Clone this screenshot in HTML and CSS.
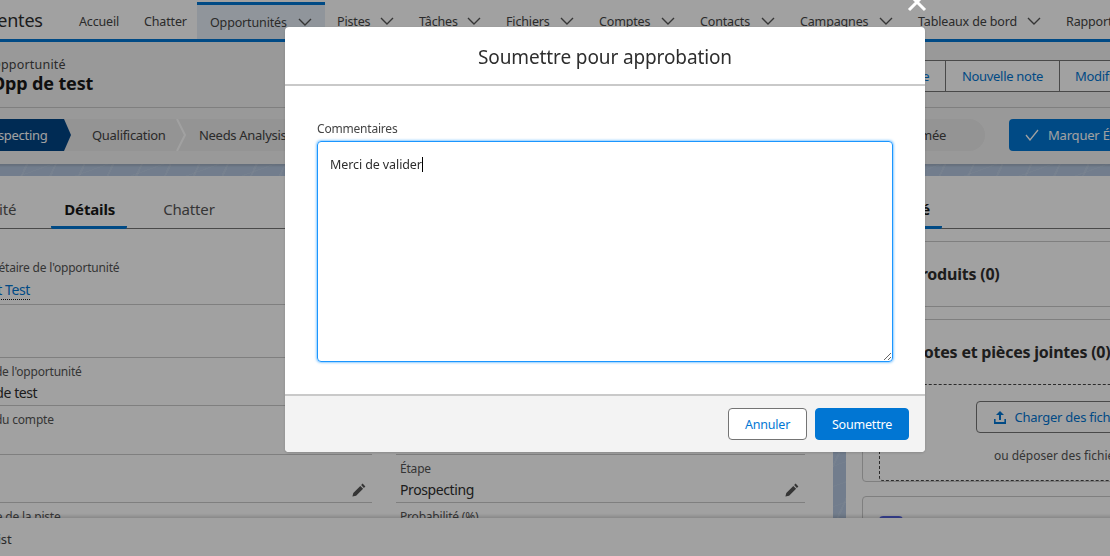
FILE: index.html
```html
<!DOCTYPE html>
<html lang="fr">
<head>
<meta charset="utf-8">
<title>Soumettre pour approbation</title>
<link rel="stylesheet" href="styles.css">
</head>
<body>
<div class="app">
  <nav class="nav">
    <div class="brand">Ventes</div>
    <div class="tabs">
      <a class="tab">Accueil</a>
      <a class="tab">Chatter</a>
      <a class="tab active">Opportunités<svg class="chev" viewBox="0 0 14 8"><path d="M1 1l6 6 6-6"/></svg></a>
      <a class="tab">Pistes<svg class="chev" viewBox="0 0 14 8"><path d="M1 1l6 6 6-6"/></svg></a>
      <a class="tab">Tâches<svg class="chev" viewBox="0 0 14 8"><path d="M1 1l6 6 6-6"/></svg></a>
      <a class="tab">Fichiers<svg class="chev" viewBox="0 0 14 8"><path d="M1 1l6 6 6-6"/></svg></a>
      <a class="tab">Comptes<svg class="chev" viewBox="0 0 14 8"><path d="M1 1l6 6 6-6"/></svg></a>
      <a class="tab">Contacts<svg class="chev" viewBox="0 0 14 8"><path d="M1 1l6 6 6-6"/></svg></a>
      <a class="tab">Campagnes<svg class="chev" viewBox="0 0 14 8"><path d="M1 1l6 6 6-6"/></svg></a>
      <a class="tab">Tableaux de bord<svg class="chev" viewBox="0 0 14 8"><path d="M1 1l6 6 6-6"/></svg></a>
      <a class="tab">Rapports</a>
    </div>
  </nav>

  <header class="head">
    <div class="head-title">
      <div class="kind">Opportunité</div>
      <div class="name">Opp de test</div>
    </div>
    <div class="actions">
      <a class="action first">Nouvelle tâche</a>
      <a class="action">Nouvelle note</a>
      <a class="action">Modifier</a>
    </div>
  </header>

  <section class="path-row">
    <div class="path">
      <div class="stage current">Prospecting</div>
      <div class="stage second">Qualification<svg class="sep" viewBox="0 0 10 32"><path d="M1 0l8 16-8 16"/></svg></div>
      <div class="stage third">Needs Analysis</div>
      <div class="stage last">Fermée</div>
    </div>
    <button class="mark"><svg class="check" viewBox="0 0 14 12"><path d="M1 6l4 5 8-10"/></svg>Marquer Étape</button>
  </section>

  <main class="content">
    <section class="card-main">
      <div class="detail-tabs">
        <a class="dtab">Activité</a>
        <a class="dtab on">Détails</a>
        <a class="dtab">Chatter</a>
      </div>
      <div class="fields">
        <div class="col col-left">
          <div class="field owner"><div class="lab">Propriétaire de l'opportunité</div><div class="val owner-val"><a class="link">Test Test</a></div></div>
          <div class="field blank"></div>
          <div class="field"><div class="lab">Nom de l'opportunité</div><div class="val">Opp de test</div></div>
          <div class="field tall"><div class="lab">Nom du compte</div><div class="val"></div></div>
          <div class="field"><div class="lab">&nbsp;</div><div class="val"><span></span><svg class="pen" viewBox="0 0 14 14"><path d="M10.6.6l2.8 2.8-1.5 1.5-2.8-2.8zM8.3 2.9l2.8 2.8-7 7-3.7.9.9-3.7z"/></svg></div></div>
          <div class="field"><div class="lab">Source de la piste</div></div>
        </div>
        <div class="col col-right">
          <div class="field owner"></div>
          <div class="field blank"></div>
          <div class="field"></div>
          <div class="field tall"></div>
          <div class="field"><div class="lab">Étape</div><div class="val"><span>Prospecting</span><svg class="pen" viewBox="0 0 14 14"><path d="M10.6.6l2.8 2.8-1.5 1.5-2.8-2.8zM8.3 2.9l2.8 2.8-7 7-3.7.9.9-3.7z"/></svg></div></div>
          <div class="field"><div class="lab">Probabilité (%)</div></div>
        </div>
      </div>
    </section>
    <aside class="panel">
      <div class="panel-tabs"><a class="dtab on">Associé</a></div>
      <div class="rel rel-products"><h2 class="rel-title">Produits (0)</h2></div>
      <div class="rel rel-notes">
        <h2 class="rel-title">Notes et pièces jointes (0)</h2>
        <div class="drop">
          <a class="upload"><svg class="up" viewBox="0 0 14 14"><path d="M7 1l4 4H8v5H6V5H3zM1 9h1.6v3h8.8V9H13v5H1z"/></svg>Charger des fichiers</a>
          <div class="drop-hint">ou déposer des fichiers</div>
        </div>
      </div>
      <div class="rel rel-next"><div class="rel-icon"></div></div>
    </aside>
  </main>

  <footer class="util">To Do List</footer>
</div>

<div class="scrim"></div>
<svg class="close" viewBox="0 0 20 20"><path d="M2 2l16 16M18 2L2 18"/></svg>
<div class="modal">
  <div class="modal-head">Soumettre pour approbation</div>
  <div class="modal-body">
    <label class="modal-label">Commentaires</label>
    <div class="area">Merci de valider<span class="caret"></span></div>
  </div>
  <div class="modal-foot">
    <button class="btn ghost">Annuler</button>
    <button class="btn primary">Soumettre</button>
  </div>
</div>
</body>
</html>
```
FILE: styles.css
```css
* { box-sizing: border-box; }
html, body { margin: 0; height: 100%; overflow: hidden; background: #fff; }
body { font-family: "Noto Sans", "Open Sans", sans-serif; color: #181818; font-size: 13px; }

.app { width: 1340px; height: 556px; margin-left: -60px; display: flex; flex-direction: column; overflow: hidden; }

/* nav */
.nav { height: 42px; flex: none; display: flex; background: #fff; border-bottom: 3px solid #0176d3; }
.brand { width: 80px; margin-left: 47px; flex: none; font-size: 18px; line-height: 41px; color: #2e2e2e; letter-spacing: -.2px; white-space: nowrap; }
.tabs { display: grid; grid-template-columns: 65px 65px 128px 82px 87px 93px 101px 100px 118px 148px 90px; }
.tab { padding: 0 13px 0 12px; display: flex; align-items: center; justify-content: space-between; font-size: 12.5px; letter-spacing: -.15px; color: #444; white-space: nowrap; height: 42px; }
.tab.active { background: #e4edf6; border-top: 3px solid #0176d3; padding-left: 13px; margin-top: 2px; height: 37px; }
.chev { width: 14px; height: 8px; fill: none; stroke: #555; stroke-width: 1.4; flex: none; }

/* page header */
.head { height: 66px; flex: none; display: flex; justify-content: space-between; align-items: center; background: #f3f3f3; border-bottom: 1px solid #c9c9c9; padding: 0 140px 0 51px; }
.kind { font-size: 12.5px; line-height: 14px; margin-top: 2px; color: #444; letter-spacing: .2px; }
.name { font-size: 18px; line-height: 22px; font-weight: 700; letter-spacing: -.15px; }
.actions { display: flex; height: 32px; margin-top: 2px; }
.action { width: 114px; display: flex; align-items: center; justify-content: center; font-size: 13px; letter-spacing: -.3px; color: #0176d3; background: #fff; border: 1px solid #747474; border-left-width: 0; white-space: nowrap; }
.action.first { width: 120px; border-left-width: 1px; }
.action:last-child { width: 80px; }

/* path */
.path-row { height: 56px; flex: none; display: flex; align-items: center; gap: 24px; background: #f3f3f3; padding: 0 81px 2px 0; }
.path { flex: 1; height: 32px; display: flex; background: #eaeaea; border-radius: 0 16px 16px 0; font-size: 13px; letter-spacing: -.3px; color: #444; overflow: hidden; }
.stage { display: flex; align-items: center; white-space: nowrap; }
.stage.current { width: 131px; padding-left: 38px; color: #fff; background: #014486; clip-path: polygon(0 0, 124px 0, 131px 50%, 124px 100%, 0 100%); }
.stage.second { margin-left: 21px; width: 94px; justify-content: space-between; }
.sep { width: 10px; height: 32px; fill: none; stroke: #fff; stroke-width: 2; }
.stage.third { margin-left: 13px; }
.stage.last { margin-left: auto; padding-right: 39px; }
.mark { width: 190px; height: 32px; flex: none; border: 0; border-radius: 4px; background: #0176d3; color: #fff; font: inherit; font-size: 13px; letter-spacing: -.2px; display: flex; align-items: center; padding: 0 0 0 16px; gap: 9px; white-space: nowrap; }
.check { width: 14px; height: 12px; fill: none; stroke: #fff; stroke-width: 1.3; }

/* content */
.content { flex: 1; min-height: 0; display: flex; gap: 13px; padding-top: 12px; overflow: hidden;
  background-color: #b5c7df;
  background-image: repeating-linear-gradient(115deg, rgba(255,255,255,.1) 0 2px, transparent 2px 26px), repeating-linear-gradient(160deg, rgba(255,255,255,.07) 0 1px, transparent 1px 19px);
  box-shadow: inset 0 2px 2px rgba(0,0,0,.12); }
.card-main { width: 893px; flex: none; background: #fff; }
.detail-tabs { height: 53px; display: flex; gap: 23px; padding: 21px 0 0 13px; border-bottom: 1px solid #747474; }
.dtab { display: block; height: 32px; padding: 0 12px 0 13px; font-size: 15px; line-height: 24px; color: #555; letter-spacing: -.15px; white-space: nowrap; }
.dtab.on { font-weight: 700; color: #181818; border-bottom: 3px solid #0176d3; border-radius: 0 0 2px 2px; }
.fields { display: flex; gap: 24px; padding-left: 21px; margin-top: 25px; }
.col { display: flex; flex-direction: column; }
.col-left { width: 411px; }
.col-right { width: 409px; }
.field { height: 48px; padding: 6px 6px 0 4px; border-bottom: 1px solid #c9c9c9; flex: none; }
.field.owner { height: 51px; }
.field.owner .val { margin-top: 3px; }
.field.blank { height: 53px; }
.field.tall { height: 49px; }
.lab { font-size: 12px; line-height: 16px; color: #555; letter-spacing: -.2px; white-space: nowrap; }
.val { height: 22px; margin-top: 2px; font-size: 14px; line-height: 22px; letter-spacing: -.4px; display: flex; justify-content: space-between; align-items: center; color: #2e2e2e; }
.owner-val { padding-left: 12px; }
.link { color: #0176d3; border-bottom: 1px dotted #181818; line-height: 18px; }
.pen { width: 14px; height: 14px; fill: #555; flex: none; }

/* right panel */
.panel { flex: 1; min-width: 0; background: #fff; padding-left: 16px; padding-right: 23px; }
.panel-tabs { height: 53px; padding-top: 21px; border-bottom: 1px solid #747474; display: flex; }
.rel { border: 1px solid #c9c9c9; border-radius: 4px; margin-top: 12px; }
.rel-products { height: 66px; }
.rel-notes { height: 163px; margin-top: 12px; }
.rel-next { height: 60px; margin-top: 14px; padding: 19px 16px; }
.rel-title { margin: 0; padding: 20px 0 0 48px; font-size: 16px; line-height: 24px; font-weight: 700; white-space: nowrap; letter-spacing: -.22px; color: #2e2e2e; }
.rel-notes .rel-title { height: 64px; }
.drop { margin-left: 16px; margin-right: 16px; height: 97px; border: 1px dashed #444; border-bottom-left-radius: 4px; display: flex; flex-direction: column; align-items: center; padding-top: 16px; }
.upload { width: 168px; height: 32px; flex: none; border: 1px solid #747474; border-radius: 4px; background: #fff; color: #0176d3; display: flex; align-items: center; gap: 8px; padding-left: 16px; font-size: 13px; letter-spacing: -.25px; white-space: nowrap; }
.up { width: 14px; height: 14px; fill: #0176d3; flex: none; }
.drop-hint { margin-top: 14px; font-size: 12px; line-height: 18px; letter-spacing: 0; color: #555; }
.rel-icon { width: 24px; height: 24px; border-radius: 4px; background: #5867e8; }

/* utility bar */
.util { height: 38px; flex: none; position: relative; background: #fff; box-shadow: 0 -2px 3px rgba(0,0,0,.16); padding-left: 14px; font-size: 13px; line-height: 42px; letter-spacing: -.2px; color: #444; }

/* modal */
.scrim { position: fixed; inset: 0; background: rgba(0,0,0,.37); }
.close { position: fixed; left: 907px; top: -8px; width: 20px; height: 20px; fill: none; stroke: #fff; stroke-width: 3; }
.modal { position: fixed; left: 285px; top: 27px; width: 640px; height: 425px; display: flex; flex-direction: column; background: #fff; border-radius: 4px; overflow: hidden; box-shadow: 0 1px 3px rgba(0,0,0,.16); }
.modal-head { height: 59px; flex: none; border-bottom: 2px solid #c9c9c9; text-align: center; font-size: 19px; line-height: 60px; color: #2e2e2e; letter-spacing: -.12px; }
.modal-body { flex: 1; padding: 35px 32px 0; }
.modal-label { display: block; font-size: 12px; line-height: 16px; color: #444; letter-spacing: -.2px; margin-bottom: 4px; }
.area { width: 576px; height: 221px; min-height: 40px; padding: 14px 12px; border: 1px solid #1b96ff; border-radius: 4px; box-shadow: 0 0 3px #1b96ff; font-size: 12.5px; line-height: 18px; color: #2e2e2e; letter-spacing: -.1px; resize: both; overflow: auto; }
.caret { display: inline-block; width: 1px; height: 15px; background: #000; vertical-align: -3px; }
.modal-foot { height: 58px; flex: none; display: flex; justify-content: flex-end; align-items: center; gap: 8px; padding: 0 16px 0 0; background: #f3f3f3; border-top: 2px solid #c9c9c9; }
.btn { height: 32px; border-radius: 4px; font: inherit; font-size: 12.5px; letter-spacing: -.2px; padding: 0; }
.ghost { width: 79px; background: #fff; border: 1px solid #747474; color: #0176d3; }
.primary { width: 94px; background: #0176d3; border: 1px solid #0176d3; color: #fff; }
```
